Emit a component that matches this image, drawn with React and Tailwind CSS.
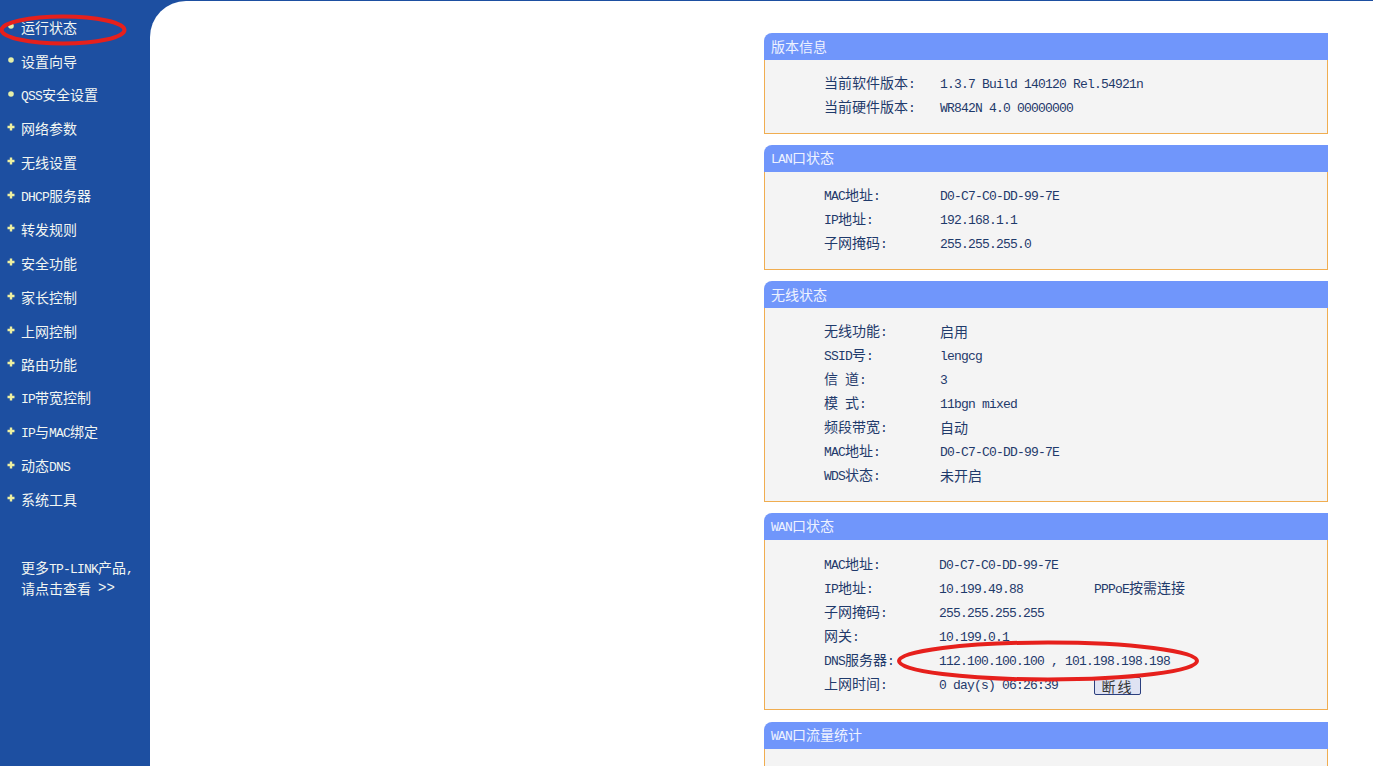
const cjk = '"Noto Sans CJK SC", "Liberation Sans", sans-serif';

const navItems = [
  "运行状态", "设置向导", "QSS安全设置", "网络参数", "无线设置",
  "DHCP服务器", "转发规则", "安全功能", "家长控制", "上网控制",
  "路由功能", "IP带宽控制", "IP与MAC绑定", "动态DNS", "系统工具",
];

const panels = [
  {
    title: "版本信息",
    rows: [
      ["当前软件版本:", "1.3.7 Build 140120 Rel.54921n"],
      ["当前硬件版本:", "WR842N 4.0 00000000"],
    ],
  },
  {
    title: "LAN口状态",
    rows: [
      ["MAC地址:", "D0-C7-C0-DD-99-7E"],
      ["IP地址:", "192.168.1.1"],
      ["子网掩码:", "255.255.255.0"],
    ],
  },
  {
    title: "无线状态",
    rows: [
      ["无线功能:", "启用"],
      ["SSID号:", "lengcg"],
      ["信 道:", "3"],
      ["模 式:", "11bgn mixed"],
      ["频段带宽:", "自动"],
      ["MAC地址:", "D0-C7-C0-DD-99-7E"],
      ["WDS状态:", "未开启"],
    ],
  },
];

// SimSun style: latin glyphs are half the width of a CJK glyph
function Txt({ children }) {
  return String(children)
    .split(/([\x20-\x7e]+)/)
    .filter(Boolean)
    .map((part, i) =>
      /[\x20-\x7e]/.test(part) ? (
        <span key={i} className="font-['Liberation_Mono'] text-[13px] tracking-[-0.8px] whitespace-pre">
          {part}
        </span>
      ) : (
        <span key={i}>{part}</span>
      )
    );
}

function Bullet({ plus }) {
  return (
    <svg width="8" height="8" viewBox="0 0 8 8" className="mr-[6px] mb-[3px] shrink-0">
      {plus ? (
        <path d="M2.8.5h2.4v2.3h2.3v2.4H5.2v2.3H2.8V5.2H.5V2.8h2.3z" fill="#eef0a0" />
      ) : (
        <circle cx="4" cy="4" r="2.8" fill="#e6efa8" />
      )}
    </svg>
  );
}

function Panel({ title, children, gap = "mb-[11px]" }) {
  return (
    <div className={gap}>
      <div className="h-[27px] flex items-center pl-[7px] pb-px bg-[#7096fb] text-[#eef2ff] text-[14px] rounded-tl-[8px]">
        <span><Txt>{title}</Txt></span>
      </div>
      <div className="bg-[#f4f4f4] border-x border-b border-[#f0ad50] pl-[59px] pt-[12px] pb-[13px]">
        {children}
      </div>
    </div>
  );
}

function Row({ label, value, extra, valueClass = "" }) {
  return (
    <div className="flex items-center h-[24px] pb-px text-[14px] text-[#1f3a6b]">
      <div className="w-[116px] shrink-0"><Txt>{label}</Txt></div>
      <div className={valueClass}><Txt>{value}</Txt></div>
      {extra}
    </div>
  );
}

export default function App() {
  return (
    <div className="relative flex h-[766px] w-[1373px] overflow-hidden bg-[#1d4fa1]" style={{ fontFamily: cjk }}>
      <aside className="w-[150px] shrink-0 pt-[10.8px] text-[14px] text-[#f2f6f2]">
        {navItems.map((item, i) => (
          <div key={item} className="flex items-center h-[33.73px] pl-[7px]">
            <Bullet plus={i > 2} />
            <span><Txt>{item}</Txt></span>
          </div>
        ))}
        <div className="mt-[40px] pl-[21px] leading-[20px]">
          <div><Txt>更多TP-LINK产品,</Txt></div>
          <div className="flex items-center h-[20px] -mt-[2px]">
            <Txt>请点击查看</Txt>
            <span className="ml-[7px] text-[14px] leading-none font-['Liberation_Mono']">&gt;&gt;</span>
          </div>
        </div>
      </aside>

      <main className="flex-1 mt-px bg-white rounded-tl-[36px] pl-[614px] pr-[45px] pt-[32px]">
        {panels.map((p) => (
          <Panel key={p.title} title={p.title}>
            {p.rows.map(([label, value]) => (
              <Row key={label} label={label} value={value} />
            ))}
          </Panel>
        ))}

        <Panel title="WAN口状态" gap="mb-[12px]">
          <div className="pt-px -mb-px">
            <Row label="MAC地址:" value="D0-C7-C0-DD-99-7E" valueClass="w-[155px] -ml-px" />
            <Row
              label="IP地址:"
              value="10.199.49.88"
              valueClass="w-[155px] -ml-px"
              extra={<span><Txt>PPPoE按需连接</Txt></span>}
            />
            <Row label="子网掩码:" value="255.255.255.255" valueClass="w-[155px] -ml-px" />
            <Row label="网关:" value="10.199.0.1" valueClass="w-[155px] -ml-px" />
            <Row label="DNS服务器:" value="112.100.100.100 , 101.198.198.198" valueClass="-ml-px" />
            <Row
              label="上网时间:"
              value="0 day(s) 06:26:39"
              valueClass="w-[155px] -ml-px"
              extra={
                <button className="w-[47px] h-[18px] mt-[2px] flex items-center justify-center border border-[#2b3f7e] rounded-[2px] bg-[#dfe3f3] text-[14px] leading-none tracking-[2px] text-[#333]">
                  断线
                </button>
              }
            />
          </div>
        </Panel>

        <Panel title="WAN口流量统计">
          <div className="h-[60px]" />
        </Panel>
      </main>

      {/* red marker rings drawn over the screenshot */}
      <svg className="absolute left-0 top-0 pointer-events-none" width="1373" height="766" fill="none">
        <ellipse cx="63" cy="30" rx="61.5" ry="13.5" stroke="#e6201c" strokeWidth="4" />
        <ellipse cx="1048" cy="661" rx="149" ry="18.5" stroke="#e6201c" strokeWidth="4" />
      </svg>
    </div>
  );
}
